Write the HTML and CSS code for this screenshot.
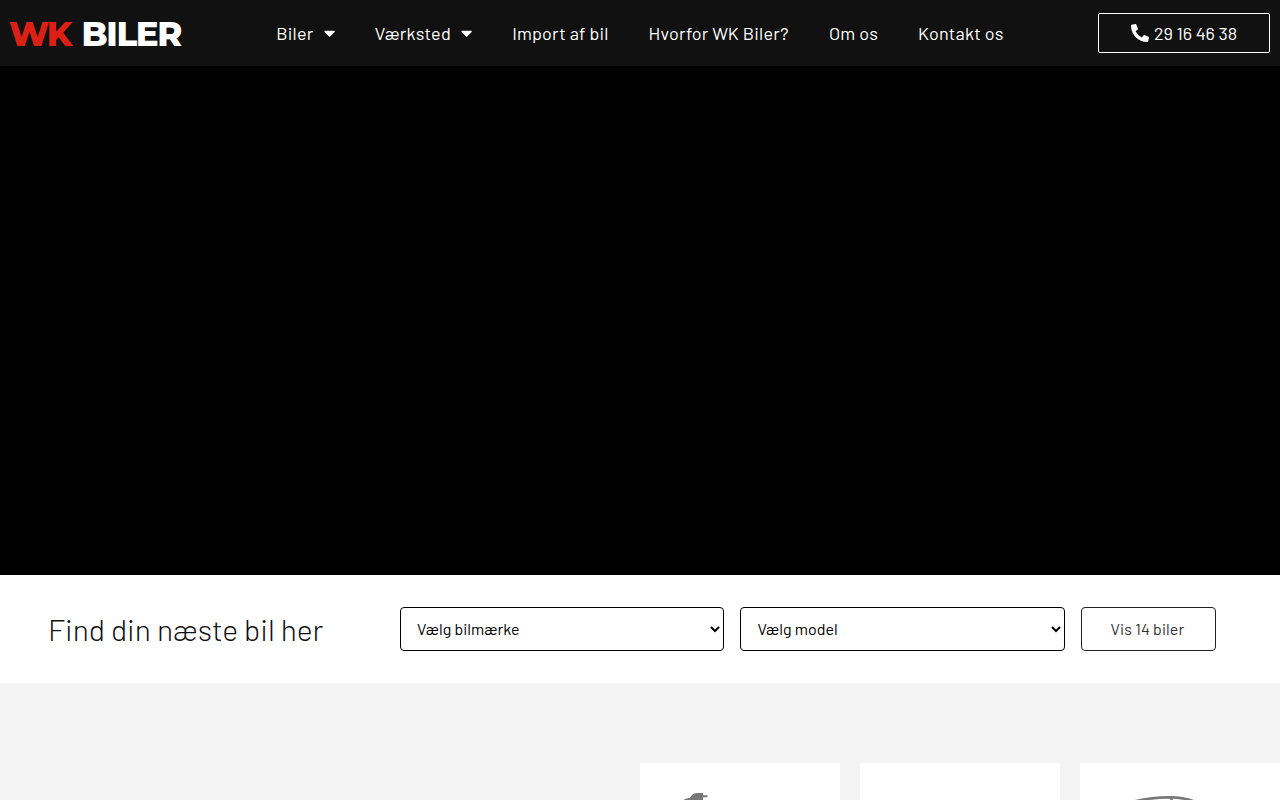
FILE: index.html
```html
<!DOCTYPE html>
<html lang="da">
<head>
    <meta charset="UTF-8">
    <meta name="viewport" content="width=device-width, initial-scale=1.0">
    <title>WK Biler</title>
    <link rel="stylesheet" href="styles.css">
</head>
<body>

    <header class="header">
        <a href="#" class="logo"><span class="logo-red">WK</span><span class="logo-white">BILER</span></a>

        <nav class="menu">
            <a href="#">Biler
                <svg class="caret" viewBox="0 0 320 512"><path d="M31.3 192h257.3c17.8 0 26.7 21.5 14.1 34.1L174.1 354.8c-7.8 7.8-20.5 7.8-28.3 0L17.2 226.1C4.6 213.5 13.5 192 31.3 192z"/></svg>
            </a>
            <a href="#">Værksted
                <svg class="caret" viewBox="0 0 320 512"><path d="M31.3 192h257.3c17.8 0 26.7 21.5 14.1 34.1L174.1 354.8c-7.8 7.8-20.5 7.8-28.3 0L17.2 226.1C4.6 213.5 13.5 192 31.3 192z"/></svg>
            </a>
            <a href="#">Import af bil</a>
            <a href="#">Hvorfor WK Biler?</a>
            <a href="#">Om os</a>
            <a href="#">Kontakt os</a>
        </nav>

        <a href="tel:29164638" class="phone">
            <svg class="phone-icon" viewBox="0 0 512 512"><path d="M497.39 361.8l-112-48a24 24 0 0 0-28 6.9l-49.6 60.6A370.66 370.66 0 0 1 130.6 204.11l60.6-49.6a23.94 23.94 0 0 0 6.9-28l-48-112A24.16 24.16 0 0 0 122.6.61l-104 24A24 24 0 0 0 0 48c0 256.5 207.9 464 464 464a24 24 0 0 0 23.4-18.6l24-104a24.29 24.29 0 0 0-14.01-27.6z"/></svg>
            <span>29 16 46 38</span>
        </a>
    </header>

    <section class="hero"></section>

    <section class="search">
        <h2 class="search-title">Find din næste bil her</h2>
        <form class="search-form">
            <select class="field">
                <option>Vælg bilmærke</option>
            </select>
            <select class="field">
                <option>Vælg model</option>
            </select>
            <button type="button" class="button">Vis 14 biler</button>
        </form>
    </section>

    <section class="types">
        <div class="cards">
            <a href="#" class="card">
                <svg class="card-icon" viewBox="0 0 140 80">
                    <path d="M12 9 Q14 5 20 5 Q22 0 28 0 H33 V2.2 H37.5 V4.2 H33 V10 H29 Q23 10 21 8 Q17 8 14 12 Z"/>
                </svg>
            </a>
            <a href="#" class="card"></a>
            <a href="#" class="card">
                <svg class="card-icon" viewBox="0 0 140 80">
                    <path class="line" d="M18 10 Q38 4.5 60 4.3 Q74 4.5 86 9"/>
                    <path class="line" d="M61 4 L62.5 12"/>
                </svg>
            </a>
        </div>
    </section>

</body>
</html>
```

FILE: styles.css
```css
* {
    box-sizing: border-box;
}

body {
    margin: 0;
    height: 100vh;
    overflow: hidden;
    font-family: Barlow, Roboto, sans-serif;
    background: #fff;
    color: #111;
}

a {
    color: inherit;
    text-decoration: none;
}

.header {
    height: 66px;
    padding: 0 10px;
    display: flex;
    justify-content: space-between;
    align-items: center;
    background: #111;
    color: #fff;
}

.logo {
    width: 172px;
    display: flex;
    justify-content: space-between;
    font-family: Montserrat, Inter, sans-serif;
    font-size: 34px;
    font-weight: 800;
    line-height: 40px;
    padding: 2px 1px 0 0;
    white-space: nowrap;
}

.logo-red {
    color: #dd2016;
    letter-spacing: -2px;
    margin-left: -1px;
}

.logo-white {
    letter-spacing: -1.4px;
}

.menu {
    display: flex;
    font-size: 18px;
    line-height: 22px;
    letter-spacing: 0.2px;
}

.menu a {
    display: flex;
    align-items: center;
    gap: 10px;
    padding: 0 20px;
    white-space: nowrap;
}

.caret {
    width: 11.25px;
    height: 18px;
    fill: #fff;
}

.phone {
    width: 172px;
    height: 40px;
    display: flex;
    justify-content: center;
    align-items: center;
    gap: 5px;
    border: 1px solid #fff;
    border-radius: 2px;
    font-size: 18px;
}

.phone-icon {
    width: 18px;
    height: 18px;
    fill: #fff;
}

.hero {
    height: 509px;
    background: #000;
}

.search {
    height: 108px;
    padding: 0 64px 0 48px;
    display: flex;
    justify-content: space-between;
    align-items: center;
}

.search-title {
    margin: 0;
    font-size: 30px;
    font-weight: 300;
    line-height: 36px;
    white-space: nowrap;
}

.search-form {
    width: 816px;
    display: grid;
    grid-template-columns: 1fr 1fr 135.2px;
    gap: 16px;
}

.field,
.button {
    height: 44px;
    border: 1px solid #000;
    border-radius: 4px;
    background: #fff;
    font-family: inherit;
    font-size: 16px;
}

.field {
    width: 100%;
    padding: 0 0 2px 12px;
    color: #000;
}

.button {
    padding: 0 2px 2px 0;
    border-color: #222;
    color: #333;
    letter-spacing: 0.08px;
}

.types {
    height: 117px;
    padding-top: 80px;
    background: #f4f4f4;
    overflow: hidden;
}

.cards {
    margin-left: 640px;
    display: grid;
    grid-template-columns: repeat(3, 200px);
    gap: 20px;
}

.card {
    height: 200px;
    padding: 30px;
    background: #fff;
}

.card-icon {
    display: block;
    width: 140px;
    height: 80px;
    fill: #777;
}

.line {
    fill: none;
    stroke: #777;
    stroke-width: 2.5;
}
```
